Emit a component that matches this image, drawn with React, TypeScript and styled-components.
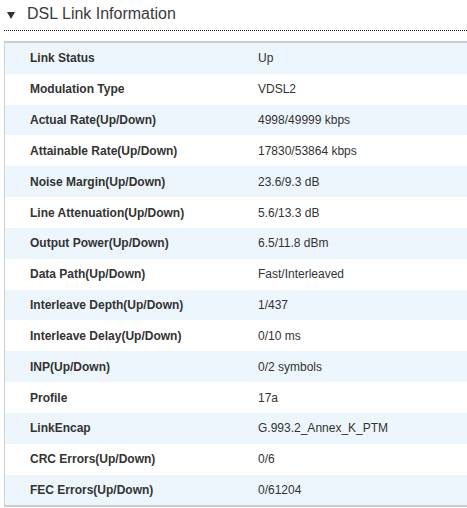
import React from "react";
import styled, { createGlobalStyle } from "styled-components";

const Global = createGlobalStyle`
  html, body { margin: 0; padding: 0; background: #fff; }
  body { font-family: "Liberation Sans", Arial, sans-serif; color: #333; }
`;

const Page = styled.div`
  width: 467px;
  padding: 0 0 0 4px;
  box-sizing: border-box;
`;

const Header = styled.div`
  display: flex;
  align-items: center;
  height: 31px;
  border-bottom: 1px dotted #222;
  gap: 12px;
  padding-left: 3px;
  padding-bottom: 2px;
  box-sizing: border-box;
`;

const Caret = styled.span`
  width: 0;
  height: 0;
  border-left: 4.5px solid transparent;
  border-right: 4.5px solid transparent;
  border-top: 7px solid #333;
  margin-top: 3px;
`;

const Title = styled.h2`
  margin: 0;
  font-family: "Liberation Sans", Arial, sans-serif;
  font-size: 16px;
  font-weight: normal;
  color: #3a3a3a;
  line-height: 20px;
`;

const Table = styled.div`
  margin-top: 10px;
  border-top: 2px solid #c9cdd1;
  border-left: 1px solid #cfcfcf;
  border-bottom: 2px solid #c9cdd1;
`;

const Row = styled.div<{ $alt: boolean }>`
  display: grid;
  grid-template-columns: 253px 1fr;
  height: 30.84px;
  align-items: center;
  background: ${(p) => (p.$alt ? "#edf6fd" : "#fff")};
  font-size: 12px;
`;

const Label = styled.div`
  padding-left: 25px;
  font-weight: bold;
  color: #333;
`;

const Value = styled.div`
  color: #333;
`;

const rows: [string, string][] = [
  ["Link Status", "Up"],
  ["Modulation Type", "VDSL2"],
  ["Actual Rate(Up/Down)", "4998/49999 kbps"],
  ["Attainable Rate(Up/Down)", "17830/53864 kbps"],
  ["Noise Margin(Up/Down)", "23.6/9.3 dB"],
  ["Line Attenuation(Up/Down)", "5.6/13.3 dB"],
  ["Output Power(Up/Down)", "6.5/11.8 dBm"],
  ["Data Path(Up/Down)", "Fast/Interleaved"],
  ["Interleave Depth(Up/Down)", "1/437"],
  ["Interleave Delay(Up/Down)", "0/10 ms"],
  ["INP(Up/Down)", "0/2 symbols"],
  ["Profile", "17a"],
  ["LinkEncap", "G.993.2_Annex_K_PTM"],
  ["CRC Errors(Up/Down)", "0/6"],
  ["FEC Errors(Up/Down)", "0/61204"],
];

export default function App() {
  return (
    <Page>
      <Global />
      <Header>
        <Caret />
        <Title>DSL Link Information</Title>
      </Header>
      <Table>
        {rows.map(([l, v], i) => (
          <Row key={l} $alt={i % 2 === 0}>
            <Label>{l}</Label>
            <Value>{v}</Value>
          </Row>
        ))}
      </Table>
    </Page>
  );
}
